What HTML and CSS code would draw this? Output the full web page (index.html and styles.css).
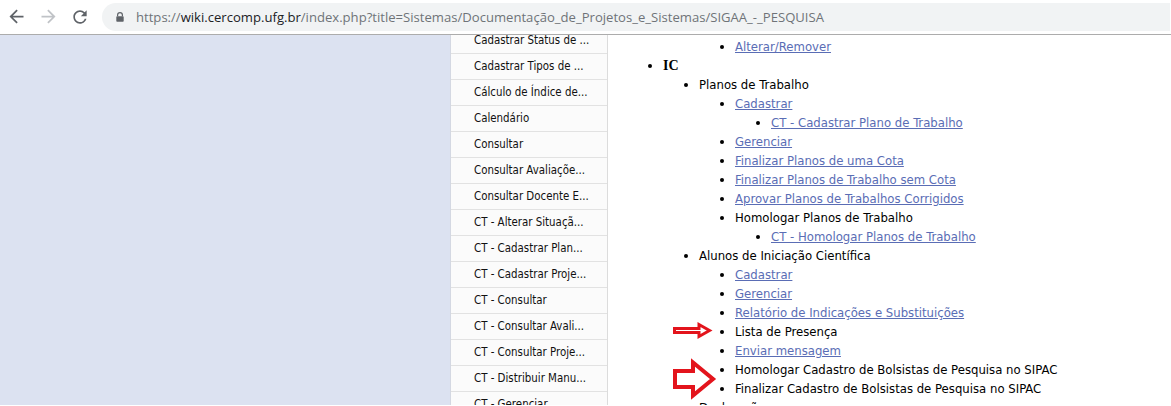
FILE: index.html
```html
<!DOCTYPE html>
<html lang="pt-BR">
<head>
<meta charset="utf-8">
<title>SIGAA - PESQUISA</title>
<link rel="stylesheet" href="styles.css">
</head>
<body>
<header class="toolbar">
  <div class="navbtns">
    <svg class="icon back" viewBox="0 0 24 24"><path d="M20 11H7.83l5.59-5.59L12 4l-8 8 8 8 1.41-1.41L7.83 13H20v-2z"/></svg>
    <svg class="icon fwd" viewBox="0 0 24 24"><path d="M4 11h12.17l-5.59-5.59L12 4l8 8-8 8-1.41-1.41L16.17 13H4v-2z"/></svg>
    <svg class="icon reload" viewBox="0 0 24 24"><path d="M17.65 6.35A7.958 7.958 0 0 0 12 4c-4.42 0-7.990 3.58-7.99 8s3.57 8 7.99 8c3.73 0 6.84-2.55 7.73-6h-2.08A5.99 5.99 0 0 1 12 18c-3.310 0-6-2.69-6-6s2.69-6 6-6c1.66 0 3.14.69 4.22 1.78L13 11h7V4l-2.35 2.35z"/></svg>
  </div>
  <div class="omnibox">
    <svg class="lock" viewBox="0 0 10 10"><path d="M2.6 4.2V3a2.4 2.4 0 0 1 4.8 0v1.2" fill="none" stroke="#5f6368" stroke-width="1.2"/><rect x="1.3" y="4.2" width="7.4" height="5.6" rx="0.8" fill="#5f6368"/></svg>
    <span class="url"><span class="dim">https://</span><span class="host">wiki.cercomp.ufg.br</span><span class="dim">/index.php?title=Sistemas/Documentação_de_Projetos_e_Sistemas/SIGAA_-_PESQUISA</span></span>
  </div>
</header>

<div class="page">
  <div class="leftpad"></div>
  <nav class="sidebar">
    <ul class="menu">
      <li>Cadastrar Status de ...</li>
      <li>Cadastrar Tipos de ...</li>
      <li>Cálculo de Índice de...</li>
      <li>Calendário</li>
      <li>Consultar</li>
      <li>Consultar Avaliaçõe...</li>
      <li>Consultar Docente E...</li>
      <li>CT - Alterar Situaçã...</li>
      <li>CT - Cadastrar Plan...</li>
      <li>CT - Cadastrar Proje...</li>
      <li>CT - Consultar</li>
      <li>CT - Consultar Avali...</li>
      <li>CT - Consultar Proje...</li>
      <li>CT - Distribuir Manu...</li>
      <li>CT - Gerenciar</li>
    </ul>
  </nav>
  <main class="content">
    <ul class="tree">
      <li class="cont">
        <ul>
          <li class="cont">
            <ul>
              <li><a href="#">Alterar/Remover</a></li>
            </ul>
          </li>
        </ul>
      </li>
      <li><b class="heading">IC</b>
        <ul>
          <li>Planos de Trabalho
            <ul>
              <li><a href="#">Cadastrar</a>
                <ul><li><a href="#">CT - Cadastrar Plano de Trabalho</a></li></ul>
              </li>
              <li><a href="#">Gerenciar</a></li>
              <li><a href="#">Finalizar Planos de uma Cota</a></li>
              <li><a href="#">Finalizar Planos de Trabalho sem Cota</a></li>
              <li><a href="#">Aprovar Planos de Trabalhos Corrigidos</a></li>
              <li>Homologar Planos de Trabalho
                <ul><li><a href="#">CT - Homologar Planos de Trabalho</a></li></ul>
              </li>
            </ul>
          </li>
          <li>Alunos de Iniciação Científica
            <ul>
              <li><a href="#">Cadastrar</a></li>
              <li><a href="#">Gerenciar</a></li>
              <li><a href="#">Relatório de Indicações e Substituições</a></li>
              <li>Lista de Presença</li>
              <li><a href="#">Enviar mensagem</a></li>
              <li>Homologar Cadastro de Bolsistas de Pesquisa no SIPAC</li>
              <li>Finalizar Cadastro de Bolsistas de Pesquisa no SIPAC</li>
            </ul>
          </li>
          <li>Declarações</li>
        </ul>
      </li>
    </ul>
  </main>
</div>

<svg class="annotations" viewBox="0 0 1171 406" aria-hidden="true">
  <polygon points="674.5,328.5 699,328.5 699,324.5 709.5,330.5 699,336.5 699,332.5 674.5,332.5" fill="#fff" stroke="#e3141c" stroke-width="3" stroke-linejoin="miter"/>
  <polygon points="675,371 693,371 693,362.5 713,379 693,395.5 693,387 675,387" fill="#fff" stroke="#e3141c" stroke-width="4" stroke-linejoin="miter"/>
</svg>
</body>
</html>
```

FILE: styles.css
```css
* { box-sizing: border-box; }

html, body {
  margin: 0;
  padding: 0;
  width: 1171px;
  height: 406px;
  overflow: hidden;
  background: #fff;
}

body {
  position: relative;
  font-family: "DejaVu Sans Condensed", "DejaVu Sans", sans-serif;
}

/* ---------- browser toolbar ---------- */
.toolbar {
  height: 35px;
  display: flex;
  align-items: center;
  background: #fff;
  border-bottom: 1px solid #acacac;
  padding-bottom: 1px;
}

.navbtns {
  display: flex;
  align-items: center;
  gap: 11px;
  padding-left: 6px;
  width: 102px;
}

.icon {
  width: 21px;
  height: 21px;
  fill: #5f6368;
}

.icon.fwd { fill: #c0c3c7; }
.icon.reload { width: 20px; height: 20px; }

.omnibox {
  flex: 1;
  height: 28px;
  background: #f1f3f4;
  border-radius: 14px 0 0 14px;
  margin-right: 1px;
  display: flex;
  align-items: center;
  padding-left: 13px;
}

.lock {
  width: 10px;
  height: 10px;
  margin-right: 11px;
}

.url {
  font-family: "Open Sans", "Noto Sans", sans-serif;
  font-size: 13.1px;
  white-space: nowrap;
}

.url .dim { color: #6f7378; }
.url .host { color: #202124; }

/* ---------- page ---------- */
.page {
  display: flex;
  height: 370px;
  overflow: hidden;
}

.leftpad {
  width: 450px;
  flex: none;
  background: #dce2f1;
}

.sidebar {
  width: 158px;
  flex: none;
  background: #fbfbfb;
  border-left: 1px solid #d4d8e2;
  border-right: 1px solid #dcdcdc;
  overflow: hidden;
}

.menu {
  list-style: none;
  margin: -7px 0 0 0;
  padding: 0;
}

.menu li {
  height: 26px;
  line-height: 25px;
  border-bottom: 1px solid #e2e2e2;
  padding-left: 23px;
  font-size: 11.4px;
  color: #111;
  white-space: nowrap;
}

/* ---------- content ---------- */
.content {
  flex: 1;
  padding-top: 2px;
  font-size: 13px;
  line-height: 19px;
  color: #000;
}

.content ul {
  margin: 0;
  padding-left: 36px;
  list-style: disc;
}

.content > .tree {
  padding-left: 55px;
}

.content li.cont {
  list-style: none;
}

.content a {
  color: #5a6db5;
  text-decoration: underline;
}

.heading {
  font-family: "Liberation Serif", "Times New Roman", serif;
  font-size: 14px;
  font-weight: bold;
}

/* ---------- red annotation arrows (overlay) ---------- */
.annotations {
  position: absolute;
  left: 0;
  top: 0;
  width: 1171px;
  height: 406px;
  pointer-events: none;
}
```
